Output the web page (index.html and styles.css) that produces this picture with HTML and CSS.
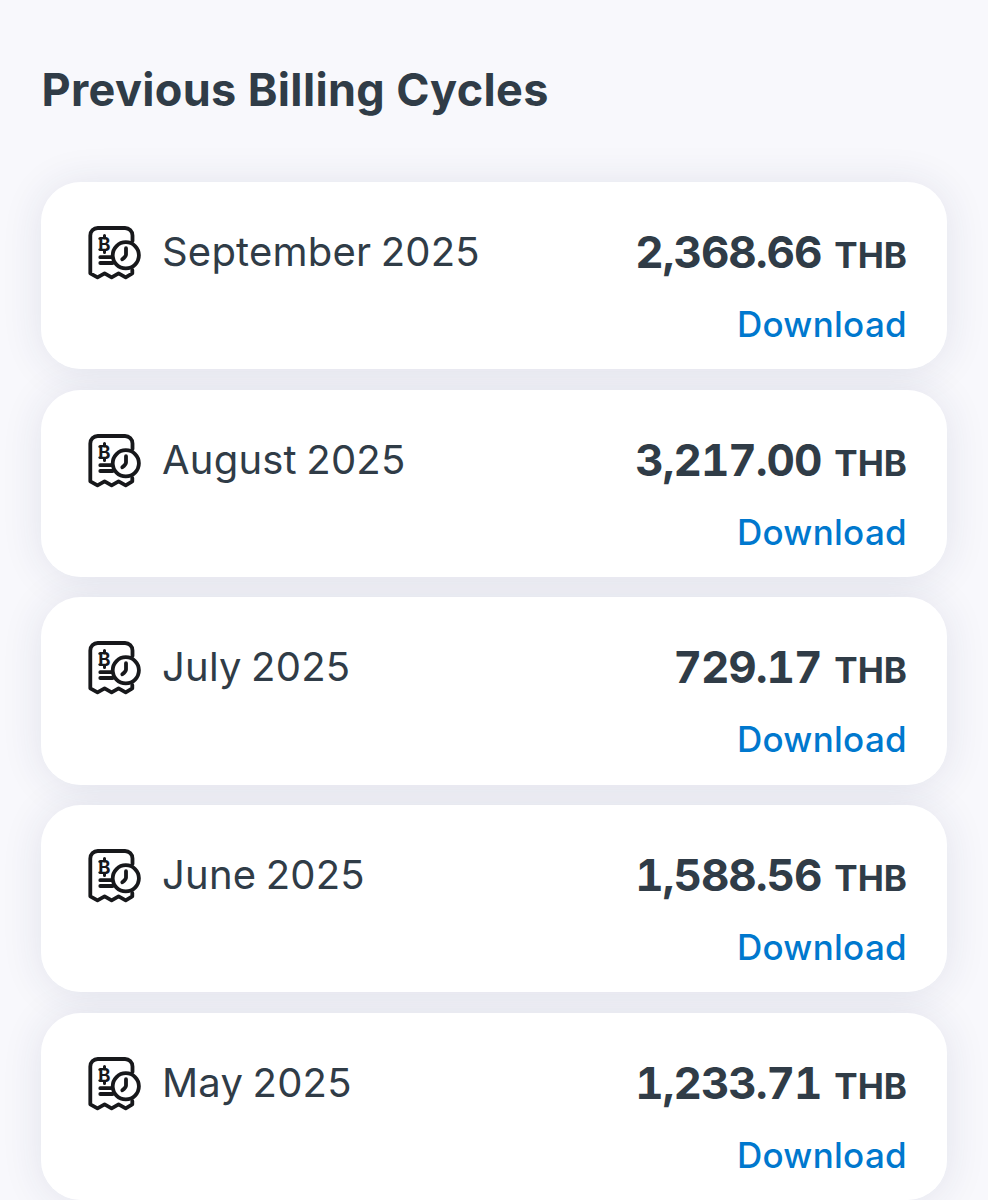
FILE: index.html
```html
<!DOCTYPE html>
<html lang="en">
<head>
    <meta charset="UTF-8">
    <meta name="viewport" content="width=device-width, initial-scale=1.0">
    <title>Previous Billing Cycles</title>
    <link rel="stylesheet" href="styles.css">
</head>
<body>
    <!-- Receipt icon shared by all rows -->
    <svg class="sprite" aria-hidden="true">
        <symbol id="receipt" viewBox="0 0 56 56">
            <g fill="none" stroke="#17181b" stroke-width="3.8" stroke-linejoin="round" stroke-linecap="round">
                <path d="M46.5 17V11.5a7.5 7.5 0 0 0-7.5-7.5H11.8a7.5 7.5 0 0 0-7.5 7.5V49.3l7.2 4 7.1-4 7 4 7-4 7.1 4 6.6-4V46"/>
                <circle cx="39.8" cy="31.3" r="13.1"/>
                <path d="M40 24.2V30.500q0 2-3.700 4.800"/>
                <path d="M14.300 33.200H25M14.300 39H26.500"/>
                <path d="M18.500 11.500V14M18.500 26.500V28.500" stroke-width="3"/>
                <path d="M13.400 14.700H15M13.400 25.600H15" stroke-width="2.200"/>
            </g>
            <text x="12.300" y="26.800" class="currency-mark">B</text>
        </symbol>
    </svg>

    <div class="container">
        <h1>Previous Billing Cycles</h1>

        <div class="cycles">
            <div class="card">
                <div class="month">
                    <svg class="icon"><use href="#receipt"/></svg>
                    <span>September 2025</span>
                </div>
                <div class="details">
                    <div class="amount">2,368.66 <small>THB</small></div>
                    <a class="download">Download</a>
                </div>
            </div>

            <div class="card">
                <div class="month">
                    <svg class="icon"><use href="#receipt"/></svg>
                    <span>August 2025</span>
                </div>
                <div class="details">
                    <div class="amount">3,217.00 <small>THB</small></div>
                    <a class="download">Download</a>
                </div>
            </div>

            <div class="card">
                <div class="month">
                    <svg class="icon"><use href="#receipt"/></svg>
                    <span>July 2025</span>
                </div>
                <div class="details">
                    <div class="amount">729.17 <small>THB</small></div>
                    <a class="download">Download</a>
                </div>
            </div>

            <div class="card">
                <div class="month">
                    <svg class="icon"><use href="#receipt"/></svg>
                    <span>June 2025</span>
                </div>
                <div class="details">
                    <div class="amount">1,588.56 <small>THB</small></div>
                    <a class="download">Download</a>
                </div>
            </div>

            <div class="card">
                <div class="month">
                    <svg class="icon"><use href="#receipt"/></svg>
                    <span>May 2025</span>
                </div>
                <div class="details">
                    <div class="amount">1,233.71 <small>THB</small></div>
                    <a class="download">Download</a>
                </div>
            </div>
        </div>
    </div>
</body>
</html>
```
FILE: styles.css
```css
* {
    box-sizing: border-box;
}
body {
    font-family: Inter, 'Liberation Sans', sans-serif;
    background: #f8f8fc;
    color: #303c47;
    margin: 0;
    height: 1200px;
    overflow: hidden;
}
.sprite {
    display: none;
}
.container {
    padding: 60px 41px 0 40.5px;
}
h1 {
    font-size: 45px;
    font-weight: 700;
    line-height: 60px;
    letter-spacing: 0.35px;
    margin: 0 0 62px;
    padding-left: 1px;
}
.cycles {
    display: flex;
    flex-direction: column;
    gap: 20.5px;
    isolation: isolate;
}
.card {
    position: relative;
    display: flex;
    justify-content: space-between;
    height: 187.2px;
    padding: 41px 40px 0 45.5px;
    background: white;
    border-radius: 40px;
}
/* shadow sits below every card so it never darkens a neighbour */
.card::before {
    content: '';
    position: absolute;
    inset: 0;
    z-index: -1;
    border-radius: 40px;
    box-shadow: 0 2px 42px rgba(35, 50, 90, 0.105);
}
.month {
    display: flex;
    align-items: center;
    gap: 20px;
    height: 58px;
    font-size: 40px;
    letter-spacing: 0.2px;
    word-spacing: -2px;
}
.month span {
    margin-top: -1px;
}
.icon {
    width: 56px;
    height: 56px;
}
.currency-mark {
    font-family: Inter, sans-serif;
    font-size: 18.5px;
    font-weight: 700;
    letter-spacing: 0;
    fill: #17181b;
}
.details {
    text-align: right;
}
.amount {
    font-size: 44px;
    font-weight: 700;
    font-variant-numeric: tabular-nums;
    letter-spacing: -1px;
    word-spacing: 2px;
    line-height: 58px;
    white-space: nowrap;
}
.amount small {
    font-size: 35px;
    font-weight: 700;
    letter-spacing: 0;
}
.download {
    display: block;
    margin-top: 18px;
    font-size: 35px;
    font-weight: 500;
    line-height: 44px;
    letter-spacing: 0.3px;
    color: #0078ce;
}
```
